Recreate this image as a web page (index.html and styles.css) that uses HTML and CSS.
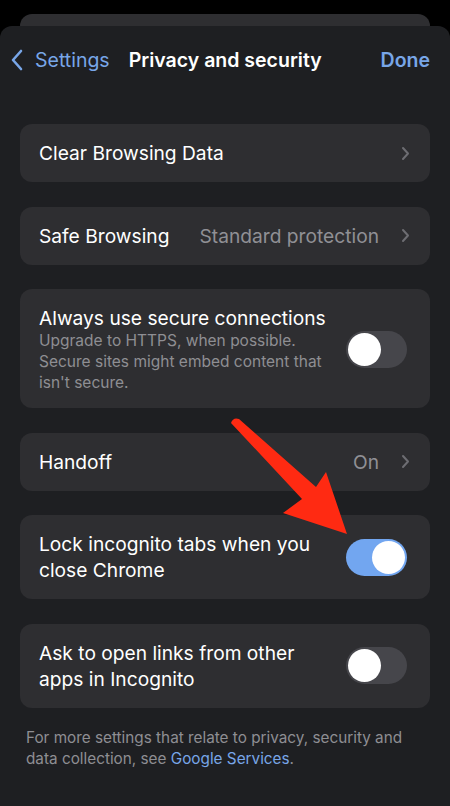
FILE: index.html
```html
<!DOCTYPE html>
<html lang="en">
<head>
    <meta charset="UTF-8">
    <meta name="viewport" content="width=device-width, initial-scale=1.0">
    <title>Privacy and security</title>
    <link rel="stylesheet" href="styles.css">
</head>
<body>
    <div class="back-sheet"></div>
    <div class="sheet">
        <div class="nav">
            <a class="nav-back" href="#">
                <svg class="back-chevron" width="14" height="22" viewBox="0 0 14 22">
                    <path d="M11 2 L3 11 L11 20" fill="none" stroke="#78a6e8" stroke-width="2.6" stroke-linecap="round" stroke-linejoin="round"/>
                </svg>
                <span>Settings</span>
            </a>
            <div class="nav-title">Privacy and security</div>
            <a class="nav-done" href="#">Done</a>
        </div>

        <div class="list">
            <div class="card row">
                <span class="row-label">Clear Browsing Data</span>
                <svg class="chevron" width="9" height="15" viewBox="0 0 9 15"><path d="M2 2 L7 7.5 L2 13" fill="none" stroke="#6d6d72" stroke-width="2" stroke-linecap="round" stroke-linejoin="round"/></svg>
            </div>

            <div class="card row">
                <span class="row-label">Safe Browsing</span>
                <span class="row-value">Standard protection</span>
                <svg class="chevron" width="9" height="15" viewBox="0 0 9 15"><path d="M2 2 L7 7.5 L2 13" fill="none" stroke="#6d6d72" stroke-width="2" stroke-linecap="round" stroke-linejoin="round"/></svg>
            </div>

            <div class="card row row-tall">
                <div class="row-text">
                    <div class="row-label">Always use secure connections</div>
                    <div class="row-sub">Upgrade to HTTPS, when possible. Secure sites might embed content that isn't secure.</div>
                </div>
                <div class="toggle"><div class="knob"></div></div>
            </div>

            <div class="card row">
                <span class="row-label">Handoff</span>
                <span class="row-value">On</span>
                <svg class="chevron" width="9" height="15" viewBox="0 0 9 15"><path d="M2 2 L7 7.5 L2 13" fill="none" stroke="#6d6d72" stroke-width="2" stroke-linecap="round" stroke-linejoin="round"/></svg>
            </div>

            <div class="card row">
                <div class="row-text">
                    <div class="row-label">Lock incognito tabs when you close Chrome</div>
                </div>
                <div class="toggle on"><div class="knob"></div></div>
            </div>

            <div class="card row">
                <div class="row-text">
                    <div class="row-label">Ask to open links from other apps in Incognito</div>
                </div>
                <div class="toggle"><div class="knob"></div></div>
            </div>
        </div>

        <p class="footer">For more settings that relate to privacy, security and data collection, see <a href="#">Google Services</a>.</p>
    </div>

    <!-- annotation arrow drawn over the screenshot -->
    <svg class="arrow" width="450" height="806" viewBox="0 0 450 806">
        <path d="M231 423 Q233 417 239 419 L316 487 L326 472 L347 534 L283 513 L302 499 Z" fill="#ff2a12"/>
    </svg>
</body>
</html>
```

FILE: styles.css
```css
* {
    margin: 0;
    padding: 0;
    box-sizing: border-box;
}

body {
    font-family: Inter, 'Noto Sans', sans-serif;
    background-color: #000;
    color: #fff;
    width: 450px;
    height: 806px;
    overflow: hidden;
    position: relative;
    padding-top: 14px;
}

a {
    text-decoration: none;
}

.back-sheet {
    height: 24px;
    margin: 0 20px;
    background-color: #2e2e31;
    border-radius: 12px 12px 0 0;
}

.sheet {
    margin-top: -12px;
    height: 780px;
    background-color: #1e1f22;
    border-radius: 12px 12px 0 0;
}

.nav {
    height: 68px;
    display: flex;
    align-items: center;
    padding: 0 20px 0 10px;
}

.nav-back {
    display: flex;
    align-items: center;
    gap: 11px;
    color: #78a6e8;
    font-size: 19.5px;
}

.nav-title {
    flex: 1;
    margin-left: 19px;
    font-size: 19.5px;
    font-weight: 600;
}

.nav-done {
    color: #78a6e8;
    font-size: 19.5px;
    font-weight: 600;
}

.list {
    display: flex;
    flex-direction: column;
    gap: 24.5px;
    padding: 30px 20px 0;
}

.card {
    background-color: #2e2e31;
    border-radius: 12px;
}

.row {
    display: flex;
    align-items: center;
    padding: 16px 20px 16px 19px;
    font-size: 19.2px;
    line-height: 26px;
}

.row-label {
    flex: 1;
}

.row-value {
    color: #909095;
    margin-right: 22px;
}

.chevron {
    display: block;
}

.row-text {
    flex: 1;
    padding-right: 20px;
}

.row-text .row-label {
    flex: none;
}

.row-tall {
    padding-top: 17px;
    padding-bottom: 15px;
}

.row-tall .row-label {
    line-height: 24px;
}

.row-sub {
    color: #8e8e93;
    font-size: 15.5px;
    line-height: 21px;
}

.toggle {
    width: 61px;
    height: 37px;
    border-radius: 19px;
    background-color: #46464b;
    padding: 2px;
    margin-right: 3px;
    flex: none;
}

.toggle.on {
    background-color: #72a6f0;
}

.knob {
    width: 33px;
    height: 33px;
    border-radius: 50%;
    background-color: #fff;
}

.toggle.on .knob {
    margin-left: 24px;
}

.footer {
    padding: 19.5px 26px 0;
    font-size: 15.3px;
    line-height: 21px;
    color: #8e8e93;
}

.footer a {
    color: #78a6e8;
}

.arrow {
    position: absolute;
    left: 0;
    top: 0;
    pointer-events: none;
}
```
